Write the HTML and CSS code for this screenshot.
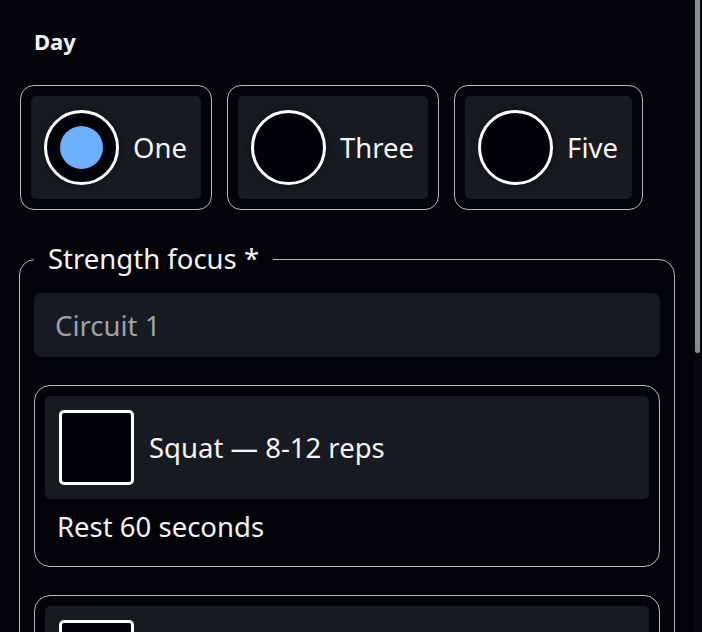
FILE: index.html
```html
<!DOCTYPE html>
<html lang="en">
<head>
<meta charset="utf-8">
<title>Workout day</title>
<link rel="stylesheet" href="styles.css">
</head>
<body>
<div class="viewport">
  <main class="page">
    <div class="day-group" role="radiogroup" aria-label="Day">
      <div class="group-label">Day</div>
      <div class="options">
        <label class="option">
          <span class="option-inner">
            <span class="radio checked"><span class="dot"></span></span>
            <span class="option-text">One</span>
          </span>
        </label>
        <label class="option">
          <span class="option-inner">
            <span class="radio"></span>
            <span class="option-text">Three</span>
          </span>
        </label>
        <label class="option">
          <span class="option-inner">
            <span class="radio"></span>
            <span class="option-text">Five</span>
          </span>
        </label>
      </div>
    </div>

    <fieldset class="focus">
      <legend class="focus-legend">Strength focus *</legend>
      <input class="circuit-input" type="text" placeholder="Circuit 1">

      <div class="exercise">
        <label class="check-row">
          <span class="checkbox"></span>
          <span class="check-text">Squat — 8-12 reps</span>
        </label>
        <div class="rest">Rest 60 seconds</div>
      </div>

      <div class="exercise">
        <label class="check-row">
          <span class="checkbox"></span>
          <span class="check-text">Push-up — 10-15 reps</span>
        </label>
        <div class="rest">Rest 45 seconds</div>
      </div>
    </fieldset>
  </main>
  <div class="scrollbar" aria-hidden="true">
    <div class="thumb"></div>
  </div>
</div>
</body>
</html>
```

FILE: styles.css
```css
html,
body {
  margin: 0;
  height: 100%;
  background: #03040a;
}

body {
  color: #f4f4f5;
  font-family: "Noto Sans", "Open Sans", sans-serif;
  overflow: hidden;
}

.viewport {
  display: flex;
  height: 100vh;
  overflow: hidden;
}

.page {
  flex: 1;
  min-width: 0;
  padding: 26px 19px 0;
  overflow: hidden;
}

.scrollbar {
  flex: none;
  width: 8px;
  box-sizing: border-box;
  padding: 0 2px 0 1px;
  background: #07080d;
}

.thumb {
  height: 353px;
  background: #8b8e94;
  border-radius: 0 0 3px 3px;
}

.group-label {
  margin-left: 15px;
  font-size: 22px;
  font-weight: 700;
  line-height: 30px;
}

.options {
  display: flex;
  gap: 15px;
  margin: 29px 0 0 1px;
}

.option {
  display: block;
  border: 1px solid #b8b9bd;
  border-radius: 14px;
  padding: 10px;
}

.option-inner {
  display: flex;
  align-items: center;
  gap: 14px;
  padding: 14px 14px 14px 13px;
  background: #171a20;
  border-radius: 5px;
}

.radio {
  width: 75px;
  height: 75px;
  box-sizing: border-box;
  border: 3px solid #ffffff;
  border-radius: 50%;
  background: #020308;
  display: flex;
  align-items: center;
  justify-content: center;
  box-shadow: 0 0 8px rgba(0, 0, 0, 0.45);
  flex: none;
}

.dot {
  width: 43px;
  height: 43px;
  border-radius: 50%;
  background: #6cb0ff;
}

.option-text {
  font-size: 27.5px;
  line-height: 36px;
}

.focus {
  margin: 31px 0 0;
  padding: 16px 14px 20px;
  border: 1px solid #b8b9bd;
  border-radius: 16px;
  min-width: 0;
}

.focus-legend {
  padding: 0 14px;
  font-size: 27.5px;
  line-height: 36px;
  color: #f4f4f5;
}

.circuit-input {
  display: block;
  width: 100%;
  box-sizing: border-box;
  height: 64px;
  margin: 0;
  padding: 0 21px;
  border: none;
  border-radius: 7px;
  background: #171a20;
  color: #f4f4f5;
  font-family: "Noto Sans", "Open Sans", sans-serif;
  font-size: 27.5px;
  outline: none;
}

.circuit-input::placeholder {
  color: #9ea2a9;
  opacity: 1;
}

.exercise {
  margin-top: 28px;
  border: 1px solid #b8b9bd;
  border-radius: 16px;
  padding: 10px;
}

.check-row {
  display: flex;
  align-items: center;
  gap: 15px;
  padding: 14px;
  background: #171a20;
  border-radius: 5px;
}

.checkbox {
  width: 75px;
  height: 75px;
  box-sizing: border-box;
  border: 3px solid #ffffff;
  border-radius: 5px;
  background: #020308;
  flex: none;
}

.check-text {
  font-size: 27.5px;
  line-height: 36px;
}

.rest {
  padding: 10px 12px 11px;
  font-size: 27.5px;
  line-height: 36px;
}
```
